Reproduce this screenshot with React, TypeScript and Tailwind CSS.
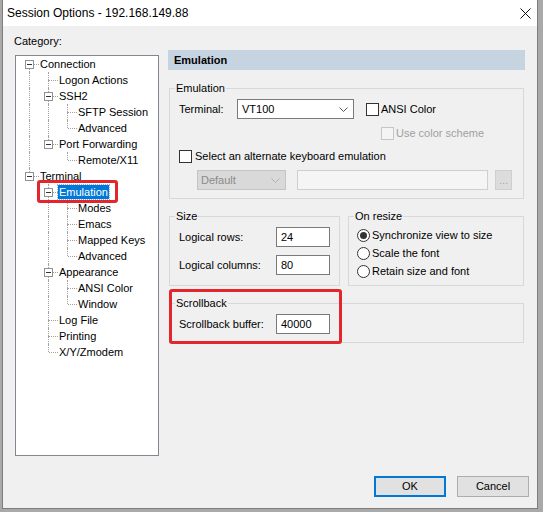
import React from "react"
import clsx from "clsx"

interface TreeNode {
  label: string
  level: number
  expander?: boolean
  selected?: boolean
}

const tree: TreeNode[] = [
  { label: "Connection", level: 0, expander: true },
  { label: "Logon Actions", level: 1 },
  { label: "SSH2", level: 1, expander: true },
  { label: "SFTP Session", level: 2 },
  { label: "Advanced", level: 2 },
  { label: "Port Forwarding", level: 1, expander: true },
  { label: "Remote/X11", level: 2 },
  { label: "Terminal", level: 0, expander: true },
  { label: "Emulation", level: 1, expander: true, selected: true },
  { label: "Modes", level: 2 },
  { label: "Emacs", level: 2 },
  { label: "Mapped Keys", level: 2 },
  { label: "Advanced", level: 2 },
  { label: "Appearance", level: 1, expander: true },
  { label: "ANSI Color", level: 2 },
  { label: "Window", level: 2 },
  { label: "Log File", level: 1 },
  { label: "Printing", level: 1 },
  { label: "X/Y/Zmodem", level: 1 },
]

// does the node at index i have a sibling further down?
const hasLaterSibling = (i: number) => {
  const lvl = tree[i].level
  for (let j = i + 1; j < tree.length; j++) {
    if (tree[j].level < lvl) return false
    if (tree[j].level === lvl) return true
  }
  return false
}

const ancestorAt = (i: number, depth: number) => {
  for (let j = i - 1; j >= 0; j--) {
    if (tree[j].level === depth) return j
  }
  return -1
}

function TreeRow({ node, index }: { node: TreeNode; index: number }) {
  const cells = []
  for (let k = 0; k < node.level; k++) {
    const a = ancestorAt(index, k)
    cells.push(
      <div key={k} className="relative w-[19px] h-full shrink-0">
        {a >= 0 && hasLaterSibling(a) && (
          <div className="absolute left-[9px] top-0 h-full border-l border-dotted border-[#a0a0a0]" />
        )}
      </div>
    )
  }
  const later = hasLaterSibling(index)
  const first = index === 0
  return (
    <div className="flex h-[16px] items-center">
      {cells}
      <div className="relative w-[19px] h-full shrink-0">
        {!first && <div className="absolute left-[9px] top-0 h-[8px] border-l border-dotted border-[#a0a0a0]" />}
        {later && <div className="absolute left-[9px] top-[8px] h-[8px] border-l border-dotted border-[#a0a0a0]" />}
        <div className="absolute left-[10px] top-[8px] w-[9px] border-t border-dotted border-[#a0a0a0]" />
        {node.expander && (
          <div className="absolute left-[5px] top-[4px] w-[9px] h-[9px] border border-[#919191] bg-white flex items-center justify-center">
            <div className="w-[5px] h-px bg-[#333]" />
          </div>
        )}
      </div>
      <span
        className={clsx(
          "px-[1px] h-[14px] leading-[14px] whitespace-nowrap",
          node.selected ? "bg-[#0078d7] text-white outline outline-1 outline-dotted outline-[#7fb5e8]" : "text-black"
        )}
      >
        {node.label}
      </span>
    </div>
  )
}

function Group({ label, className, children }: { label: string; className?: string; children: React.ReactNode }) {
  return (
    <fieldset className={clsx("border border-[#d8d8d8] min-w-0", className)}>
      <legend className="ml-[5px] px-[1px] text-[11px] leading-[14px] text-black">{label}</legend>
      {children}
    </fieldset>
  )
}

function Checkbox({ disabled }: { disabled?: boolean }) {
  return (
    <div
      className={clsx(
        "w-[13px] h-[13px] border shrink-0",
        disabled ? "border-[#c6c6c6] bg-[#f4f4f4]" : "border-[#333] bg-white"
      )}
    />
  )
}

function Radio({ checked }: { checked?: boolean }) {
  return (
    <div className="w-[13px] h-[13px] rounded-full border border-[#333] bg-white flex items-center justify-center shrink-0">
      {checked && <div className="w-[7px] h-[7px] rounded-full bg-[#333]" />}
    </div>
  )
}

function Chevron({ color }: { color: string }) {
  return (
    <svg width="9" height="5" viewBox="0 0 9 5" fill="none">
      <path d="M0.5 0.5 L4.5 4.5 L8.5 0.5" stroke={color} strokeWidth="1" />
    </svg>
  )
}

function TextBox({ value }: { value: string }) {
  return (
    <div className="w-[54px] h-[20px] border border-[#7a7a7a] bg-white pl-[4px] leading-[18px]">{value}</div>
  )
}

export default function App() {
  return (
    <div className="w-[543px] h-[512px] bg-[#a9a9a9] overflow-hidden font-['Liberation_Sans',Arial,sans-serif] text-[11px] text-black">
      <div className="ml-[2px] w-[536px] h-[509px] border-x border-b border-[#7d7d7d] bg-[#f0f0f0] flex flex-col">
        {/* Title bar */}
        <div className="h-[26px] bg-white flex items-center justify-between pl-[4px] pr-[6px] shrink-0">
          <span className="text-[12px] text-black">Session Options - 192.168.149.88</span>
          <svg width="11" height="11" viewBox="0 0 11 11" fill="none">
            <path d="M0.5 0.5 L10.5 10.5 M10.5 0.5 L0.5 10.5" stroke="#111" strokeWidth="1" />
          </svg>
        </div>

        {/* Body */}
        <div className="flex-1 flex flex-col">
          <div className="flex">
            {/* Category tree */}
            <div className="pl-[12px] shrink-0">
              <div className="mt-[7px] -ml-[1px] h-[16px] leading-[16px]">Category:</div>
              <div className="relative mt-[6px] w-[144px] h-[401px] border border-[#828790] bg-white pl-[4px]">
                {tree.map((n, i) => (
                  <TreeRow key={i} node={n} index={i} />
                ))}
                <div className="absolute left-[21px] top-[124px] w-[81px] h-[23px] rounded-[3px] border-[3px] border-[#e3262b]" />
              </div>
            </div>

            {/* Settings panel */}
            <div className="ml-[9px] mt-[24px] w-[357px]">
              <div className="h-[20px] bg-[#c6d4e2] pl-[6px] flex items-center font-bold text-[11px]">Emulation</div>

              <div className="ml-[1px] w-[355px]">
                <Group label="Emulation" className="mt-[11px]">
                  <div className="pl-[9px] pt-[4px] pb-[8px]">
                    <div className="flex items-center h-[20px]">
                      <span className="w-[58px]">Terminal:</span>
                      <div className="w-[117px] h-[20px] border border-[#7a7a7a] bg-white flex items-center justify-between pl-[4px] pr-[5px]">
                        <span>VT100</span>
                        <Chevron color="#555" />
                      </div>
                      <div className="ml-[12px]">
                        <Checkbox />
                      </div>
                      <span className="ml-[2px]">ANSI Color</span>
                    </div>
                    <div className="flex items-center h-[14px] mt-[7px] pl-[202px]">
                      <Checkbox disabled />
                      <span className="ml-[2px] text-[#a0a0a0]">Use color scheme</span>
                    </div>
                    <div className="flex items-center h-[14px] mt-[9px]">
                      <Checkbox />
                      <span className="ml-[3px]">Select an alternate keyboard emulation</span>
                    </div>
                    <div className="flex items-center h-[20px] mt-[7px] pl-[18px]">
                      <div className="w-[89px] h-[20px] border border-[#c4c4c4] bg-[#d9d9d9] flex items-center justify-between pl-[3px] pr-[5px] text-[#8a8a8a]">
                        <span>Default</span>
                        <Chevron color="#b0b0b0" />
                      </div>
                      <div className="ml-[11px] w-[191px] h-[20px] border border-[#cfcfcf] bg-[#f5f5f5]" />
                      <div className="ml-[7px] w-[17px] h-[20px] border border-[#cfcfcf] bg-[#dcdcdc] flex items-center justify-center text-[#a8a8a8] leading-none">
                        ...
                      </div>
                    </div>
                  </div>
                </Group>

                <div className="flex gap-[8px] mt-[10px]">
                  <Group label="Size" className="w-[171px]">
                    <div className="pl-[9px] pt-[4px] pb-[10px]">
                      <div className="flex items-center h-[20px]">
                        <span className="w-[97px]">Logical rows:</span>
                        <TextBox value="24" />
                      </div>
                      <div className="flex items-center h-[20px] mt-[8px]">
                        <span className="w-[97px]">Logical columns:</span>
                        <TextBox value="80" />
                      </div>
                    </div>
                  </Group>
                  <Group label="On resize" className="w-[176px]">
                    <div className="pl-[8px] pt-[5px] flex flex-col gap-[4px]">
                      <div className="flex items-center h-[14px]">
                        <Radio checked />
                        <span className="ml-[2px]">Synchronize view to size</span>
                      </div>
                      <div className="flex items-center h-[14px]">
                        <Radio />
                        <span className="ml-[2px]">Scale the font</span>
                      </div>
                      <div className="flex items-center h-[14px]">
                        <Radio />
                        <span className="ml-[2px]">Retain size and font</span>
                      </div>
                    </div>
                  </Group>
                </div>

                <div className="relative mt-[10px]">
                  <Group label="Scrollback">
                    <div className="pl-[9px] pt-[4px] pb-[8px]">
                      <div className="flex items-center h-[20px]">
                        <span className="w-[97px]">Scrollback buffer:</span>
                        <TextBox value="40000" />
                      </div>
                    </div>
                  </Group>
                  <div className="absolute left-0 -top-[7px] w-[173px] h-[55px] rounded-[3px] border-[3px] border-[#e3262b]" />
                </div>
              </div>
            </div>
          </div>

          {/* Buttons */}
          <div className="mt-auto mb-[11px] pr-[8px] flex justify-end gap-[11px]">
            <button className="w-[72px] h-[21px] border-2 border-[#0078d7] bg-[#e1e1e1] text-[11px]">OK</button>
            <button className="w-[72px] h-[21px] border border-[#adadad] bg-[#e1e1e1] text-[11px]">Cancel</button>
          </div>
        </div>
      </div>
    </div>
  )
}
